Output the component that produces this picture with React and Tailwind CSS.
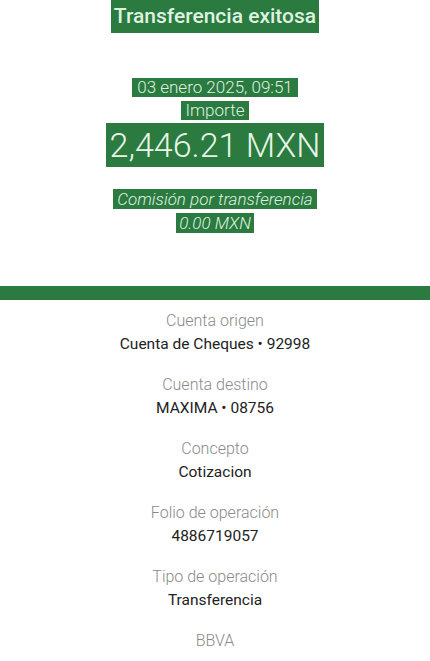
import React from 'react';

const details = [
  { label: 'Cuenta origen', value: 'Cuenta de Cheques • 92998' },
  { label: 'Cuenta destino', value: 'MAXIMA • 08756' },
  { label: 'Concepto', value: 'Cotizacion' },
  { label: 'Folio de operación', value: '4886719057' },
  { label: 'Tipo de operación', value: 'Transferencia' },
];

export default function App() {
  return (
    <div className="w-[430px] h-[661px] overflow-hidden bg-white font-['Roboto',sans-serif] text-center">
      {/* Header */}
      <div className="flex flex-col items-center">
        <div className="h-[33px] flex items-end">
          <span className="bg-[#2b7a3f] text-[#dff2e0] text-[21px] font-medium px-[3px] leading-[33px] pt-[4px]">Transferencia exitosa</span>
        </div>

        <div className="mt-[45px] flex flex-col items-center">
          <span className="bg-[#2b7a3f] text-[#dff2e0] text-[17px] font-light px-[5px] leading-[19px]">03 enero 2025, 09:51</span>
          <span className="mt-[4px] bg-[#2b7a3f] text-[#dff2e0] text-[17px] font-light px-[5px] leading-[19px]">Importe</span>
          <span className="mt-[3px] bg-[#2b7a3f] text-[#e6f5e6] text-[34px] font-light px-[4px] leading-[44px]">2,446.21 MXN</span>
          <span className="mt-[22px] bg-[#2b7a3f] text-[#dff2e0] text-[17px] font-light italic px-[4px] leading-[20px]">Comisión por transferencia</span>
          <span className="mt-[4px] bg-[#2b7a3f] text-[#dff2e0] text-[17px] font-light italic px-[3px] leading-[20px]">0.00 MXN</span>
        </div>
      </div>

      {/* Divider bar */}
      <div className="mt-[53px] h-[14px] bg-[#2b7a3f]" />

      {/* Details */}
      <div className="flex flex-col pt-[11px] gap-[21px]">
        {details.map((d) => (
          <div key={d.label} className="flex flex-col">
            <span className="text-[16px] font-light text-[#8a8a8a] leading-[20px]">{d.label}</span>
            <span className="mt-[3px] text-[15.5px] text-[#222] leading-[20px]">{d.value}</span>
          </div>
        ))}
        <span className="text-[16px] font-light text-[#8a8a8a] leading-[20px]">BBVA</span>
      </div>
    </div>
  );
}
